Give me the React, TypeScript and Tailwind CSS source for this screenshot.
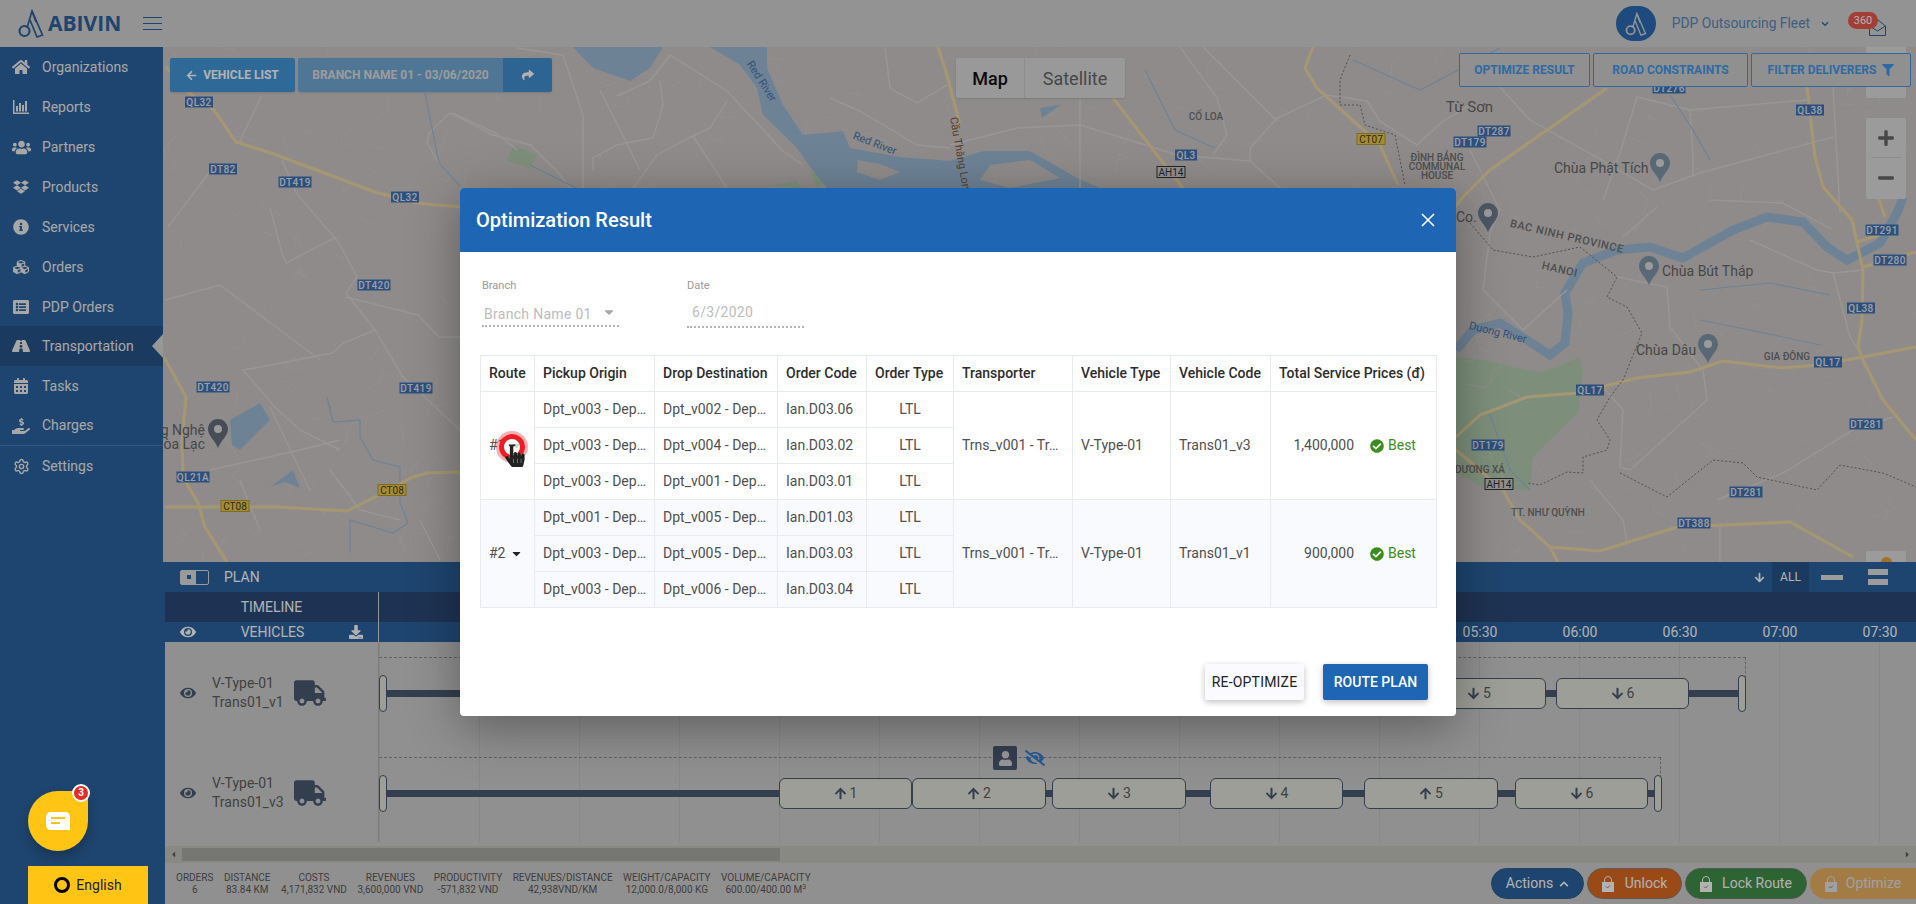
import { Settings } from 'lucide-react';
import {
    FaArrowDown, FaArrowLeft, FaArrowUp, FaCalendarAlt, FaCaretDown, FaCheckCircle, FaChevronDown, FaChevronUp,
    FaCubes, FaDownload, FaDropbox, FaEye, FaEyeSlash, FaFilter, FaHandHoldingUsd, FaHandPointer, FaHome,
    FaInfoCircle, FaListAlt, FaMinus, FaPlus, FaRoad, FaShare, FaTruck, FaUsers, FaUser, FaCaretLeft, FaCaretRight,
} from 'react-icons/fa';

function ReportsIcon() {
    return (
        <svg width="16" height="14" viewBox="0 0 16 14" fill="currentColor">
            <path d="M0 0h1.5v12.5H16V14H0z" />
            <rect x="3" y="6" width="2" height="5.5" />
            <rect x="6" y="3" width="2" height="8.5" />
            <rect x="9" y="5" width="2" height="6.5" />
            <rect x="12" y="1" width="2" height="10.5" />
        </svg>
    );
}

const navItems = [
    { label: 'Organizations', icon: <FaHome size={18} /> },
    { label: 'Reports', icon: <ReportsIcon /> },
    { label: 'Partners', icon: <FaUsers size={19} /> },
    { label: 'Products', icon: <FaDropbox size={16} /> },
    { label: 'Services', icon: <FaInfoCircle size={16} /> },
    { label: 'Orders', icon: <FaCubes size={16} /> },
    { label: 'PDP Orders', icon: <FaListAlt size={16} /> },
    { label: 'Transportation', icon: <FaRoad size={18} />, active: true },
    { label: 'Tasks', icon: <FaCalendarAlt size={16} /> },
    { label: 'Charges', icon: <FaHandHoldingUsd size={18} />, divider: true },
    { label: 'Settings', icon: <Settings size={17} /> },
];

const highways = [
    '165,507 277,507 347,511 373,498 413,477 427,473 460,472',
    '164,357 186,397 182,440 183,477 198,503 205,527 227,562',
    '166,67 189,93 214,110 236,142 271,153 375,192 416,203 460,207',
    '1313,47 1305,68 1317,88 1380,145 1398,185',
    '938,47 947,75 960,125',
    '1113,98 1157,155 1183,188',
    '1607,88 1547,130 1490,170 1463,197 1455,207',
    '1807,87 1815,157 1823,187 1852,220 1863,270 1862,320 1858,347 1863,360 1883,400 1916,440',
    '1456,437 1480,415 1527,397 1577,393 1637,378 1690,372 1723,361 1783,368 1817,365 1863,357 1916,347',
    '1456,450 1503,490 1520,520 1550,547 1600,551 1677,527 1790,522 1853,557',
    '1857,242 1880,235',
    '1863,267 1916,252',
    '1878,197 1885,217',
    '1550,547 1558,562',
];

const streets = [
    '262,95 239,143', '282,160 296,193 339,243 357,277 346,293 375,330 403,377 460,430',
    '168,227 196,190 211,170', '270,208 282,253 286,263 336,237', '346,297 418,315 439,337 460,337',
    '375,330 343,343 332,353 261,367 243,370 275,407 300,430 340,450', '450,113 429,133 427,143 439,163 461,187',
    '452,113 496,133 517,150', '517,48 563,55 583,115 583,188', '617,96 650,81 670,55 727,91 783,151 803,165',
    '727,101 710,128 693,136 657,155 633,188', '693,136 727,188', '450,113 493,135 530,145 557,171 570,188',
    '660,81 663,105 653,138 617,145 593,158 593,171', '830,98 860,111 917,145 950,148', '885,47 890,88 917,103 947,85',
    '1080,98 1080,188', '950,145 1017,128 1080,125 1123,138 1177,155 1250,161 1280,188', '1180,47 1217,98 1227,135 1213,155',
    '1203,47 1277,121', '1250,161 1250,148 1277,118 1327,95 1367,101 1380,121 1417,145 1443,121 1470,105',
    '1500,87 1530,120 1607,163 1653,190 1700,173 1833,137', '1637,97 1620,153 1603,200', '1637,97 1690,110 1807,100',
    '1690,110 1693,157 1693,177', '1833,87 1840,213', '1490,233 1483,290 1523,330 1567,290', '1657,207 1623,237',
    '1710,200 1783,203 1833,230', '1750,240 1817,270 1833,273 1863,270', '1617,277 1667,287 1670,327 1703,370 1707,400 1630,470 1620,467 1623,410 1603,387',
    '1833,273 1850,337 1863,357', '1717,500 1783,473 1853,430 1893,417', '1590,480 1623,520 1627,543', '1720,523 1720,562',
    '165,300 220,285 280,330 320,360', '210,470 300,450 340,440', '270,407 300,470 310,490', '240,480 260,530',
    '330,470 360,510 400,520', '420,520 440,560', '600,90 640,170', '1470,150 1500,210 1490,233',
];

// thin village lanes, scattered the same way on every run
let seed = 7;
const rand = (n: number) => {
    seed = (seed * 16807) % 2147483647;
    return seed % n;
};
const lanes = Array.from({ length: 520 }).map(() => {
    const x = 165 + rand(1750);
    const y = 48 + rand(512);
    const x2 = x + rand(37) - 18;
    const y2 = y + rand(37) - 18;
    return `${x},${y} ${x2},${y2} ${x2 + rand(25) - 12},${y2 + rand(25) - 12}`;
});

const streams = [
    '425,93 439,163 461,187', '327,397 333,422 360,420 360,437 373,460 400,467 400,503 408,523 393,533 350,520 350,553',
    '1145,70 1175,130 1215,148', '1353,60 1420,90 1500,48', '1670,95 1693,130 1710,160', '1700,290 1770,283 1830,295',
    '1700,320 1750,330 1820,345', '530,165 580,190', '1488,410 1510,470 1530,490',
];

const shields = [
    ['QL32', 199, 102, 28], ['DT82', 223, 169, 28], ['DT419', 295, 182, 33], ['QL32', 405, 197, 28],
    ['DT420', 374, 285, 33], ['DT420', 213, 387, 33], ['DT419', 416, 388, 33], ['QL21A', 193, 477, 33],
    ['QL3', 1186, 155, 22], ['DT287', 1494, 131, 33], ['DT179', 1470, 142, 33], ['DT276', 1669, 88, 33],
    ['QL38', 1810, 110, 28], ['DT291', 1882, 230, 33], ['DT280', 1890, 260, 33], ['QL38', 1861, 308, 28],
    ['QL17', 1828, 362, 28], ['QL17', 1590, 390, 28], ['DT281', 1866, 424, 33], ['DT281', 1746, 492, 33],
    ['DT388', 1694, 523, 33], ['DT179', 1488, 445, 33],
] as const;

function Pin({ x, y, fill = '#7f95a8' }: { x: number; y: number; fill?: string }) {
    return (
        <g transform={`translate(${x} ${y})`}>
            <path d="M0 -14C-6 -14 -10 -9 -10 -4C-10 3 -3 7 0 15C3 7 10 3 10 -4C10 -9 6 -14 0 -14Z" fill={fill} />
            <circle cx="0" cy="-4" r="4" fill="#dddddd" />
        </g>
    );
}

function MapCanvas() {
    return (
        <svg className="absolute inset-0" width="1753" height="515" viewBox="163 47 1753 515">
            <rect x="163" y="47" width="1753" height="515" fill="#cdc8c8" />
            <g fill="#b4cdb0">
                <path d="M1456 357L1483 360L1540 373L1580 357L1583 373L1578 413L1533 457L1530 490L1483 487L1456 473Z" />
                <path d="M507 161L513 145L538 155L530 168Z" />
                <path d="M810 171L827 181L817 188Z" />
                <path d="M767 186L797 181L800 188Z" />
            </g>
            <g fill="none" stroke="#d5d0d0" strokeWidth=".7">
                {lanes.map(s => <polyline key={s} points={s} />)}
            </g>
            <g fill="#9dbbd6">
                <path d="M573 47L663 47L650 68L630 81L593 68Z" />
                <path d="M710 47L767 47L767 68L783 105L803 135L843 131L850 148L900 157L950 161L983 151L1030 151L1077 178L1100 188L827 188L813 171L797 148L763 115L757 88L740 65Z" />
                <path d="M230 420L260 403L270 420L260 430L240 450L232 445Z" />
                <path d="M270 487L293 470L300 488L285 482Z" />
                <path d="M1040 108L1062 104L1042 118Z" />
            </g>
            <path d="M858 160L880 164L900 172L880 180L857 172Z" fill="#cdc8c8" />
            <path d="M990 165L1030 160L1060 178L1010 188L980 180Z" fill="#cdc8c8" />
            <polyline points="1456,350 1473,330 1500,323 1527,340 1550,355 1565,343 1568,313 1565,293 1583,263 1617,250 1650,247 1683,258 1733,230 1767,217 1803,222 1827,247 1847,260 1880,243 1897,213 1903,197" fill="none" stroke="#9dbbd6" strokeWidth="9" />
            <g fill="none" stroke="#dcd7d7" strokeWidth="1.4">
                {streets.map(s => <polyline key={s} points={s} />)}
            </g>
            <g fill="none" stroke="#9dbbd6" strokeWidth="1.2">
                {streams.map(s => <polyline key={s} points={s} />)}
            </g>
            <g fill="none" stroke="#ecd9a2" strokeWidth="3">
                {highways.map(s => <polyline key={s} points={s} />)}
            </g>
            <g fill="none" stroke="#76706f" strokeWidth="1" strokeDasharray="2 2">
                <polyline points="1470,223 1493,250 1533,257 1580,247 1617,277 1607,297 1627,307 1642,333 1623,380 1610,397 1597,420 1610,440 1607,450 1583,457 1583,473 1567,472 1540,485 1527,483" />
                <polyline points="1620,473 1667,497 1713,460 1743,463 1757,477 1817,490 1840,465 1883,473 1916,487" />
                <polyline points="1350,55 1340,80 1340,105 1360,105 1365,125 1395,135 1405,185" />
            </g>
            {shields.map(([text, x, y, w]) => (
                <g key={`${text}${x}`}>
                    <rect x={x - w / 2} y={y - 5.5} width={w} height="11" fill="#3f73b4" />
                    <text x={x} y={y + 3.5} textAnchor="middle" fontSize="10" fontWeight="500" letterSpacing=".4" fill="#e0e4ea">{text}</text>
                </g>
            ))}
            {([['CT08', 235, 506], ['CT08', 392, 490], ['CT07', 1371, 139]] as const).map(([text, x, y]) => (
                <g key={`${text}${x}`}>
                    <rect x={x - 14} y={y - 5.5} width="28" height="11" fill="#ecc94a" stroke="#b59a2c" />
                    <text x={x} y={y + 3.5} textAnchor="middle" fontSize="10" fill="#3f3d2a">{text}</text>
                </g>
            ))}
            {([[1171, 172], [1499, 484]] as const).map(([x, y]) => (
                <g key={x}>
                    <rect x={x - 14} y={y - 5.5} width="28" height="11" fill="#cfcfcf" stroke="#333" />
                    <text x={x} y={y + 3.5} textAnchor="middle" fontSize="10" fill="#333">AH14</text>
                </g>
            ))}
            <g fill="#666666" fontSize="14">
                <text x="1446" y="112" fontSize="15">Từ Sơn</text>
                <text x="1554" y="173">Chùa Phật Tích</text>
                <text x="1456" y="222">Co.</text>
                <text x="1662" y="276">Chùa Bút Tháp</text>
                <text x="1636" y="355">Chùa Dâu</text>
                <text x="205" y="435" textAnchor="end">Làng Nghệ</text>
                <text x="205" y="449" textAnchor="end">Hòa Lạc</text>
            </g>
            <g fill="#707070" fontSize="10" fontWeight="500" textAnchor="middle">
                <text x="1437" y="161">ĐÌNH BẢNG</text>
                <text x="1437" y="170">COMMUNAL</text>
                <text x="1437" y="179">HOUSE</text>
                <text x="1206" y="120">CỔ LOA</text>
                <text x="1787" y="360">GIA ĐÔNG</text>
                <text x="1480" y="473">DƯƠNG XÁ</text>
                <text x="1548" y="516">TT. NHƯ QUỲNH</text>
                <text x="1567" y="240" transform="rotate(13 1567 236)" fontSize="11" letterSpacing=".6">BAC NINH PROVINCE</text>
                <text x="1560" y="273" transform="rotate(13 1560 269)" fontSize="11" letterSpacing=".6">HANOI</text>
            </g>
            <g fill="#4a76a8" fontSize="11" textAnchor="middle">
                <text x="1498" y="336" transform="rotate(14 1498 332)">Duong River</text>
                <text x="762" y="85" transform="rotate(58 762 81)">Red River</text>
                <text x="875" y="147" transform="rotate(21 875 143)">Red River</text>
            </g>
            <text x="957" y="157" transform="rotate(80 957 157)" textAnchor="middle" fontSize="11" fill="#7c5a40">Cầu Thăng Long</text>
            <Pin x={1660} y={167} />
            <Pin x={1488} y={217} fill="#6c7f90" />
            <Pin x={1649} y={270} />
            <Pin x={1708} y={348} />
            <Pin x={218} y={433} fill="#666f7d" />
        </svg>
    );
}

function LogoMark({ color, className }: { color: string; className?: string }) {
    return (
        <svg className={className} viewBox="0 0 26 29" fill="none" stroke={color} strokeWidth="1.7">
            <circle cx="6.5" cy="22" r="5" strokeWidth="2.2" />
            <path d="M9 19L14 2L24.5 26L19 28L12 11" />
            <path d="M14 2L18 13" />
        </svg>
    );
}

function TopBar() {
    return (
        <header className="h-[47px] shrink-0 flex items-center bg-[#d3d3d3]">
            <div className="flex items-center w-[143px] pl-[18px]">
                <LogoMark color="#2c64a0" className="w-[26px] h-[29px]" />
                <span className="ml-[4px] text-[21px] leading-none font-bold text-[#2c64a0] font-['Open_Sans',sans-serif]">ABIVIN</span>
            </div>
            <div className="flex flex-col gap-[5px] w-[19px]">
                <div className="h-px bg-[#2c64a0]"></div>
                <div className="h-px bg-[#2c64a0]"></div>
                <div className="h-px bg-[#2c64a0]"></div>
            </div>
            <div className="ml-auto flex items-center">
                <div className="w-[40px] h-[35px] rounded-full bg-[#2c6ab3] flex items-center justify-center">
                    <LogoMark color="#d3d3d3" className="w-[24px] h-[24px]" />
                </div>
                <span className="ml-[16px] text-[13.8px] text-[#5a88bd]">PDP Outsourcing Fleet</span>
                <FaChevronDown size={8} className="ml-[11px] text-[#2c64a0]" />
                <div className="relative ml-[40px] mr-[30px] mt-[8px] w-[17px] h-[17px]">
                    <svg width="17" height="17" viewBox="0 0 17 17" fill="none" stroke="#2c64a0">
                        <path d="M.5 7L8.5 .5L16.5 7V16.5H.5Z" />
                        <path d="M.5 7L8.5 12L16.5 7" />
                    </svg>
                    <span className="absolute right-[8px] top-[-7px] w-[30px] h-[17px] rounded-full bg-[#e85a4a] text-[11px] leading-[17px] text-center text-white">360</span>
                </div>
            </div>
        </header>
    );
}

function Sidebar() {
    return (
        <aside className="w-[163px] shrink-0 bg-[#2c64a0] text-[#f0f0f0] text-[14px]">
            {navItems.map(item => (
                <div
                    key={item.label}
                    className={`relative h-[40px] flex items-center ${item.active ? 'bg-[#285389] -mt-px' : ''} ${item.divider ? 'border-b border-[#4a7bb0]' : ''}`}
                >
                    <span className="w-[42px] pl-[8px] pr-[8px] flex justify-center">{item.icon}</span>
                    <span>{item.label}</span>
                    {item.active && <span className="absolute right-0 top-[8px] border-y-[12px] border-y-transparent border-r-[11px] border-r-[#d9d9d9]"></span>}
                </div>
            ))}
        </aside>
    );
}

function MapControls() {
    return (
        <>
            <div className="absolute left-[7px] top-[11px] flex gap-[3px] text-[12px] font-bold">
                <div className="w-[125px] h-[34px] rounded-[2px] bg-[#4397d9] text-white flex items-center justify-center gap-[6px] shadow">
                    <FaArrowLeft size={11} />
                    <span>VEHICLE LIST</span>
                </div>
                <div className="flex rounded-[2px] overflow-hidden shadow">
                    <div className="w-[205px] h-[34px] bg-[#71a9d6] text-[#e0e0e0] flex items-center justify-center">BRANCH NAME 01 - 03/06/2020</div>
                    <div className="w-[49px] h-[34px] bg-[#4290d2] text-white flex items-center justify-center"><FaShare size={12} /></div>
                </div>
            </div>
            <div className="absolute left-[793px] top-[11px] w-[169px] h-[40px] flex bg-[#dcdcdc] rounded-[2px] shadow text-[18px]">
                <div className="w-[69px] flex items-center justify-center font-medium text-[#111] border-r border-[#cccccc]">Map</div>
                <div className="flex-1 flex items-center justify-center text-[#666666]">Satellite</div>
            </div>
            <div className="absolute right-[10px] top-0 w-[40px] h-[51px] rounded-b-[2px] bg-[#dedede]"></div>
            <div className="absolute right-[5px] top-[6px] flex gap-[3px] text-[12px] font-bold text-[#4399e9]">
                <div className="w-[131px] h-[34px] border border-[#4399e9] rounded-[2px] bg-[#cfcfcf] flex items-center justify-center">OPTIMIZE RESULT</div>
                <div className="w-[155px] h-[34px] border border-[#4399e9] rounded-[2px] bg-[#cfcfcf] flex items-center justify-center">ROAD CONSTRAINTS</div>
                <div className="w-[160px] h-[34px] border border-[#4399e9] rounded-[2px] bg-[#cfcfcf] flex items-center justify-center gap-[6px]">
                    <span>FILTER DELIVERERS</span>
                    <FaFilter size={12} />
                </div>
            </div>
            <div className="absolute right-[10px] top-[71px] w-[40px] h-[81px] rounded-[2px] bg-[#dedede] text-[#666666] flex flex-col items-center px-[5px]">
                <div className="h-[40px] w-full flex items-center justify-center border-b border-[#c8c8c8]"><FaPlus size={18} /></div>
                <div className="h-[40px] flex items-center justify-center"><FaMinus size={18} /></div>
            </div>
            <div className="absolute right-[10px] bottom-0 w-[40px] h-[11px] rounded-t-[2px] bg-[#dedede] flex justify-center overflow-hidden">
                <div className="w-[11px] h-[11px] mt-[6px] rounded-full bg-[#e8a33a]"></div>
            </div>
        </>
    );
}

const ganttRows = [
    {
        code: 'Trans01_v1',
        dashEnd: 1367,
        endPill: 1359,
        nodes: [
            { left: 913, w: 120, up: true, n: 1 },
            { left: 1033, w: 134, up: false, n: 5 },
            { left: 1177, w: 133, up: false, n: 6 },
        ],
    },
    {
        code: 'Trans01_v3',
        dashEnd: 1282,
        endPill: 1275,
        nodes: [
            { left: 400, w: 133, up: true, n: 1 },
            { left: 533, w: 134, up: true, n: 2 },
            { left: 673, w: 134, up: false, n: 3 },
            { left: 831, w: 133, up: false, n: 4 },
            { left: 985, w: 134, up: true, n: 5 },
            { left: 1136, w: 133, up: false, n: 6 },
        ],
    },
];

const times = ['00:30', '01:00', '01:30', '02:00', '02:30', '03:00', '03:30', '04:00', '04:30', '05:00', '05:30', '06:00', '06:30', '07:00', '07:30'];

function GanttRow({ row }: { row: (typeof ganttRows)[number] }) {
    return (
        <div className="flex h-[100px]">
            <div className="w-[214px] shrink-0 border-r border-[#b4b4b4] flex items-center pl-[15px] pt-[2px]">
                <FaEye size={16} className="text-[#495a72]" />
                <div className="ml-[16px] w-[82px] text-[14px] leading-[19px] text-[#5e5e5e]">
                    <div>V-Type-01</div>
                    <div>{row.code}</div>
                </div>
                <FaTruck size={32} className="text-[#495a72]" />
            </div>
            <div className="relative flex-1">
                {Array.from({ length: 16 }).map((_, i) => (
                    <div key={i} className="absolute top-0 bottom-0 w-px bg-[#c2c2c2]" style={{ left: i * 100 }}></div>
                ))}
                <div className="absolute left-0 top-[15px] border-t border-dashed border-[#8f8f8f]" style={{ width: row.dashEnd }}></div>
                <div className="absolute top-[15px] h-[21px] border-r border-dashed border-[#8f8f8f]" style={{ left: row.dashEnd - 1 }}></div>
                <div className="absolute top-[48px] h-[7px] bg-[#495a72] left-0" style={{ width: row.endPill }}></div>
                <div className="absolute left-0 top-[33px] w-[8px] h-[37px] rounded-full border border-[#495a72] bg-[#e2e2da]"></div>
                <div className="absolute top-[33px] w-[8px] h-[37px] rounded-full border border-[#495a72] bg-[#e2e2da]" style={{ left: row.endPill }}></div>
                {row.nodes.map(node => (
                    <div
                        key={node.n}
                        className="absolute top-[36px] h-[31px] rounded-[6px] border border-[#495a72] bg-[#e2e2da] flex items-center justify-center gap-[3px] text-[14px] text-[#5e5e5e]"
                        style={{ left: node.left, width: node.w }}
                    >
                        {node.up ? <FaArrowUp size={13} className="text-[#495a72]" /> : <FaArrowDown size={13} className="text-[#495a72]" />}
                        <span>{node.n}</span>
                    </div>
                ))}
                {row.code === 'Trans01_v3' && (
                    <div className="absolute left-[614px] top-[4px] flex items-center gap-[8px]">
                        <div className="w-[24px] h-[24px] rounded-[2px] bg-[#495a72] text-[#d8d8d8] flex items-center justify-center"><FaUser size={15} /></div>
                        <FaEyeSlash size={20} className="text-[#3b82d6]" />
                    </div>
                )}
            </div>
        </div>
    );
}

const stats = [
    ['ORDERS', '6'], ['DISTANCE', '83.84 KM'], ['COSTS', '4,171,832 VND'], ['REVENUES', '3,600,000 VND'],
    ['PRODUCTIVITY', '-571,832 VND'], ['REVENUES/DISTANCE', '42,938VND/KM'], ['WEIGHT/CAPACITY', '12,000.0/8,000 KG'],
];

function LockIcon() {
    return (
        <svg width="12" height="16" viewBox="0 0 12 16" fill="none">
            <path d="M2.5 7V4a3.5 3.5 0 0 1 7 0v3" stroke="currentColor" />
            <rect y="6" width="12" height="10" fill="currentColor" />
            <path d="M4 10.5L5.5 12L8 9.5" stroke="#888" />
        </svg>
    );
}

function PlanPanel() {
    return (
        <section className="flex-1 min-h-0 ml-[2px] flex flex-col bg-[#cfcfcf]">
            <div className="h-[30px] shrink-0 bg-[#2c64a0] text-white flex items-center text-[14px]">
                <div className="ml-[15px] w-[29px] h-[15px] rounded-[2px] border border-[#dddddd] flex">
                    <div className="w-[15px] bg-[#dddddd] flex items-center justify-center"><div className="w-[4px] h-[4px] bg-[#2c64a0]"></div></div>
                </div>
                <span className="ml-[15px]">PLAN</span>
                <div className="ml-auto flex items-center h-full">
                    <FaArrowDown size={11} />
                    <div className="ml-[7px] w-[37px] h-full bg-[#285389] flex items-center justify-center text-[12px]">ALL</div>
                    <div className="ml-[12px] w-[22px] h-[5px] bg-[#e0e0e0]"></div>
                    <div className="ml-[25px] mr-[28px] w-[20px] flex flex-col gap-[4px]">
                        <div className="h-[6px] bg-[#e0e0e0]"></div>
                        <div className="h-[6px] bg-[#e0e0e0]"></div>
                    </div>
                </div>
            </div>
            <div className="h-[30px] shrink-0 bg-[#2c4a78] text-white flex text-[14px]">
                <div className="w-[214px] border-r border-[#d8d8d8] flex items-center justify-center">TIMELINE</div>
            </div>
            <div className="h-[20px] shrink-0 bg-[#2c64a0] text-white flex text-[14px]">
                <div className="w-[214px] shrink-0 border-r border-[#d8d8d8] flex items-center justify-between pl-[15px] pr-[15px]">
                    <FaEye size={16} />
                    <span>VEHICLES</span>
                    <FaDownload size={14} />
                </div>
                <div className="flex pl-[51px]">
                    {times.map(t => <span key={t} className="w-[100px] shrink-0 text-center">{t}</span>)}
                </div>
            </div>
            <div className="shrink-0">
                {ganttRows.map(row => <GanttRow key={row.code} row={row} />)}
            </div>
            <div className="mt-[4px] h-[17px] shrink-0 bg-[#c5c5bd] flex items-center px-[4px] text-[#5e5e5e]">
                <FaCaretLeft size={9} />
                <div className="ml-[4px] w-[598px] h-[13px] bg-[#aaaaa4]"></div>
                <FaCaretRight size={9} className="ml-auto" />
            </div>
            <div className="flex-1 flex items-center justify-between">
                <div className="flex gap-[10.5px] pl-[11px] text-[10px] leading-[12px] text-center text-[#595959]">
                    {stats.map(([label, value]) => (
                        <div key={label}>
                            <div>{label}</div>
                            <div>{value}</div>
                        </div>
                    ))}
                    <div>
                        <div>VOLUME/CAPACITY</div>
                        <div>600.00/400.00 M<sup className="text-[7px]">3</sup></div>
                    </div>
                </div>
                <div className="flex gap-[3px] text-[14px] text-white">
                    <div className="w-[93px] h-[31px] rounded-full bg-[#2c64a0] border border-[#3a5f85] flex items-center justify-center gap-[6px]">Actions <FaChevronUp size={10} /></div>
                    <div className="w-[95px] h-[31px] rounded-full bg-[#dc6a20] border border-[#8a7f75] flex items-center justify-center gap-[11px]"><LockIcon />Unlock</div>
                    <div className="w-[122px] h-[31px] rounded-full bg-[#438e4a] border border-[#6f8272] flex items-center justify-center gap-[10px]"><LockIcon />Lock Route</div>
                    <div className="w-[106px] h-[31px] rounded-l-full bg-[#eab263] flex items-center justify-center gap-[9px] text-[#e6e6e6]"><LockIcon />Optimize</div>
                </div>
            </div>
        </section>
    );
}

const groups = [
    {
        route: '#1',
        transporter: 'Trns_v001 - Transporter 001',
        vehicle: 'Trans01_v3',
        price: '1,400,000',
        rows: [
            ['Dpt_v003 - Depot 003', 'Dpt_v002 - Depot 002', 'Ian.D03.06'],
            ['Dpt_v003 - Depot 003', 'Dpt_v004 - Depot 004', 'Ian.D03.02'],
            ['Dpt_v003 - Depot 003', 'Dpt_v001 - Depot 001', 'Ian.D03.01'],
        ],
    },
    {
        route: '#2',
        transporter: 'Trns_v001 - Transporter 001',
        vehicle: 'Trans01_v1',
        price: '900,000',
        rows: [
            ['Dpt_v001 - Depot 001', 'Dpt_v005 - Depot 005', 'Ian.D01.03'],
            ['Dpt_v003 - Depot 003', 'Dpt_v005 - Depot 005', 'Ian.D03.03'],
            ['Dpt_v003 - Depot 003', 'Dpt_v006 - Depot 006', 'Ian.D03.04'],
        ],
    },
];

const cell = 'h-[36px] border border-[#e6eaf2] px-[8px] font-normal text-left';

function ResultTable() {
    return (
        <table className="w-[956px] table-fixed border-collapse text-[14px] text-[#4f4f4f]">
            <colgroup>
                <col className="w-[54px]" />
                <col className="w-[120px]" />
                <col className="w-[123px]" />
                <col className="w-[89px]" />
                <col className="w-[87px]" />
                <col className="w-[119px]" />
                <col className="w-[98px]" />
                <col className="w-[100px]" />
                <col className="w-[166px]" />
            </colgroup>
            <thead>
                <tr className="text-[#2d2d2d]">
                    {['Route', 'Pickup Origin', 'Drop Destination', 'Order Code', 'Order Type', 'Transporter', 'Vehicle Type', 'Vehicle Code'].map(h => (
                        <th key={h} className={`${cell} !font-medium whitespace-nowrap`}>{h}</th>
                    ))}
                    <th className={`${cell} !font-medium whitespace-nowrap`}>Total Service Prices (đ)</th>
                </tr>
            </thead>
            <tbody>
                {groups.map((group, g) => group.rows.map((row, r) => (
                    <tr key={row[2]} className={g === 1 ? 'bg-[#f9fafd]' : ''}>
                        {r === 0 && (
                            <td rowSpan={3} className={cell}>
                                <span className="inline-flex items-center gap-[4px]">{group.route} <FaCaretDown size={13} className="text-[#222]" /></span>
                            </td>
                        )}
                        <td className={cell}><div className="truncate">{row[0]}</div></td>
                        <td className={cell}><div className="truncate">{row[1]}</div></td>
                        <td className={cell}>{row[2]}</td>
                        <td className={`${cell} !text-center`}>LTL</td>
                        {r === 0 && (
                            <>
                                <td rowSpan={3} className={cell}><div className="truncate">{group.transporter}</div></td>
                                <td rowSpan={3} className={cell}>V-Type-01</td>
                                <td rowSpan={3} className={cell}>{group.vehicle}</td>
                                <td rowSpan={3} className={`${cell} !px-0`}>
                                    <div className="flex items-center">
                                        <span className="w-[83px] text-right">{group.price}</span>
                                        <FaCheckCircle size={14} className="ml-[16px] text-[#3c8c1e]" />
                                        <span className="ml-[4px] text-[#3c8c1e]">Best</span>
                                    </div>
                                </td>
                            </>
                        )}
                    </tr>
                )))}
            </tbody>
        </table>
    );
}

function ResultDialog() {
    return (
        <div className="absolute inset-0 z-10 bg-black/30 flex justify-center items-start pt-[188px]">
            <div className="relative w-[996px] rounded-[4px] overflow-hidden bg-white shadow-[0_12px_50px_rgba(0,0,0,.35)]">
                <div className="h-[64px] px-[16px] bg-[#1e65b4] text-white flex items-center justify-between">
                    <h2 className="text-[20px] font-medium">Optimization Result</h2>
                    <svg width="14" height="14" viewBox="0 0 14 14" stroke="#fff" strokeWidth="1.6" className="mr-[5px]"><path d="M1 1L13 13M13 1L1 13" /></svg>
                </div>
                <div className="px-[20px] pb-[16px]">
                    <div className="flex gap-[68px] pl-[2px] pt-[27px] mb-[27px]">
                        <div className="w-[137px]">
                            <div className="h-[14px] text-[11px] leading-[14px] text-[#9a9a9a]">Branch</div>
                            <div className="h-[34px] pt-[10px] pl-[2px] pr-[3px] flex items-center justify-between text-[14px] tracking-[.3px] text-[#bdbdbd] border-b-2 border-dotted border-[#b4b4b4]">
                                <span>Branch Name 01</span>
                                <FaCaretDown size={14} className="text-[#a8a8a8] -mt-[4px]" />
                            </div>
                        </div>
                        <div className="w-[117px]">
                            <div className="h-[14px] text-[11px] leading-[14px] text-[#9a9a9a]">Date</div>
                            <div className="h-[35px] pt-[6px] pl-[5px] flex items-center text-[14px] tracking-[.3px] text-[#bdbdbd] border-b-2 border-dotted border-[#b4b4b4]">6/3/2020</div>
                        </div>
                    </div>
                    <ResultTable />
                    <div className="mt-[56px] pr-[8px] flex justify-end gap-[19px] text-[14px]">
                        <button className="w-[99px] h-[36px] rounded-[2px] bg-[#fbfbff] text-[#222] tracking-[.2px] shadow-[0_2px_6px_rgba(0,0,0,.25)]">RE-OPTIMIZE</button>
                        <button className="w-[105px] h-[36px] rounded-[2px] bg-[#1e65b4] text-white font-medium shadow-[0_2px_6px_rgba(0,0,0,.25)]">ROUTE PLAN</button>
                    </div>
                </div>
                {/* click marker from the recording */}
                <div className="absolute left-[39px] top-[246px] w-[26px] h-[26px] rounded-full border-[5px] border-[#ee1c25] bg-white/80 shadow-[0_0_0_3px_rgba(238,28,37,.35)] flex items-center justify-center">
                    <FaCaretDown size={12} className="text-[#222] -mt-[3px]" />
                </div>
                <FaHandPointer size={22} className="absolute left-[44px] top-[257px] text-[#222] drop-shadow-[1px_1px_0_#fff]" />
            </div>
        </div>
    );
}

export default function App() {
    return (
        <div className="relative w-[1916px] h-[904px] overflow-hidden flex flex-col font-[Roboto,sans-serif]">
            <TopBar />
            <div className="flex-1 min-h-0 flex">
                <Sidebar />
                <div className="flex-1 min-w-0 flex flex-col bg-[#2c64a0]">
                    <div className="relative h-[515px] shrink-0 overflow-hidden">
                        <MapCanvas />
                        <MapControls />
                    </div>
                    <PlanPanel />
                </div>
            </div>
            <ResultDialog />
            <div className="absolute z-20 left-[28px] top-[791px] w-[60px] h-[60px] rounded-full rounded-tr-[6px] bg-[#ffc414] shadow-[0_6px_12px_rgba(0,0,0,.25)] flex items-center justify-center">
                <svg width="24" height="18" viewBox="0 0 24 18">
                    <path d="M5 0H19C22 0 24 2 24 5V18H5C2 18 0 16 0 13V5C0 2 2 0 5 0Z" fill="#fff" />
                    <path d="M5 6H19M5 11H14" stroke="#ffc414" strokeWidth="2" />
                </svg>
                <span className="absolute right-[-2px] top-[-7px] w-[18px] h-[18px] rounded-full bg-[#e32c24] border-2 border-white text-white text-[10px] font-bold leading-[14px] text-center">3</span>
            </div>
            <div className="absolute z-20 left-[28px] top-[866px] w-[120px] h-[38px] bg-[#ffc414] flex items-center justify-center gap-[6px] text-[14px] text-[#222]">
                <span className="w-[16px] h-[16px] rounded-full border-[3px] border-black"></span>
                <span>English</span>
            </div>
        </div>
    );
}
